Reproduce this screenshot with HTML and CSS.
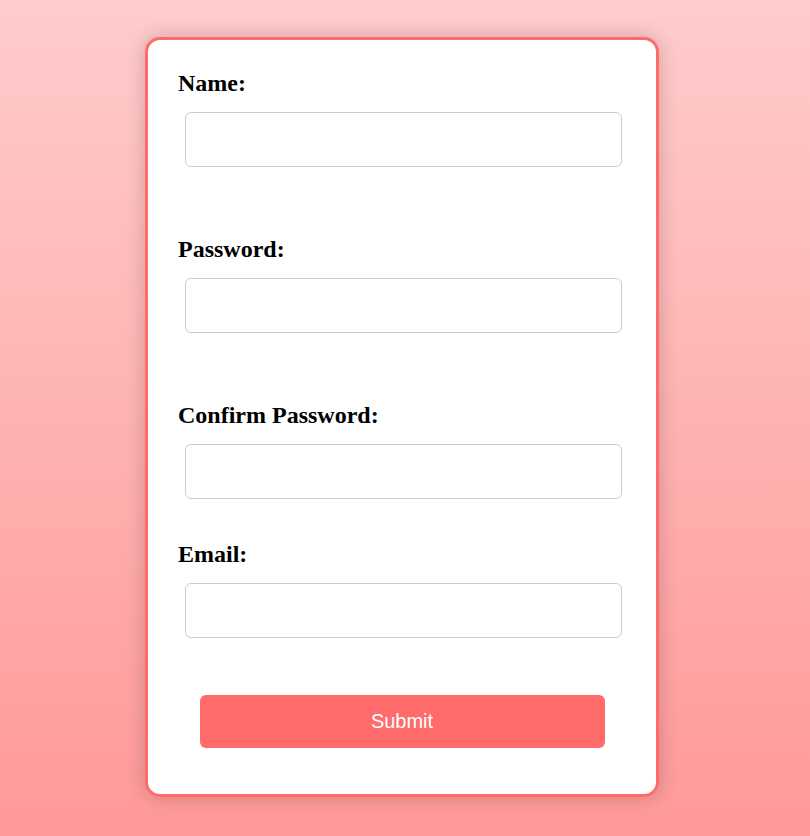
FILE: index.html
```html
<!DOCTYPE html>
<html>
<head>
<meta charset="utf-8">
<link rel="stylesheet" href="styles.css">
</head>
<body>
<form class="card">
  <div class="field field-tall">
    <label class="label">Name:</label>
    <input class="input" type="text">
  </div>
  <div class="field field-tall">
    <label class="label">Password:</label>
    <input class="input" type="password">
  </div>
  <div class="field">
    <label class="label">Confirm Password:</label>
    <input class="input" type="password">
  </div>
  <div class="field">
    <label class="label">Email:</label>
    <input class="input" type="email">
  </div>
  <button class="submit" type="button">Submit</button>
</form>
</body>
</html>
```
FILE: styles.css
```css
html, body {
  margin: 0;
  height: 100%;
}
body {
  background: linear-gradient(to bottom, #ffcccc, #ff9999);
  font-family: "Liberation Serif", "Times New Roman", serif;
  padding-top: 37px;
  box-sizing: border-box;
}
.card {
  box-sizing: border-box;
  width: 514px;
  margin: 0 auto;
  background: #fff;
  border: 3px solid #ff6b6b;
  border-radius: 15px;
  box-shadow: 0 0 20px rgba(0, 0, 0, 0.2);
  padding: 29px 30px 46px 30px;
  display: flex;
  flex-direction: column;
  margin-left: 145px;
}
.field {
  display: flex;
  flex-direction: column;
  margin-bottom: 41px;
}
.field-tall {
  margin-bottom: 68px;
}
.label {
  font-size: 24px;
  font-weight: bold;
  color: #000;
  line-height: 28px;
  margin-bottom: 15px;
}
.input {
  box-sizing: border-box;
  width: 437px;
  height: 55px;
  margin-left: 7px;
  border: 1px solid #cccccc;
  border-radius: 6px;
  background: #fff;
  padding: 10px;
  font-size: 16px;
  outline: none;
}
.submit {
  align-self: center;
  width: 405px;
  height: 53px;
  margin-top: 16px;
  background: #ff6b6b;
  color: #fff;
  border: none;
  border-radius: 6px;
  font-family: "Liberation Sans", Arial, sans-serif;
  font-size: 20px;
}
```
